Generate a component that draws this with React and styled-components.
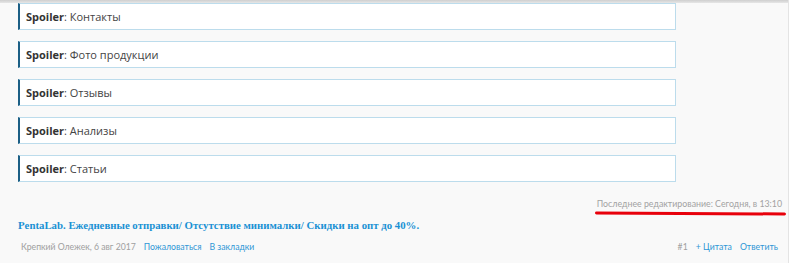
import React from "react";
import styled, { createGlobalStyle } from "styled-components";

const Global = createGlobalStyle`
  html, body {
    margin: 0;
    padding: 0;
    background: #ffffff;
  }
  body {
    font-family: "Open Sans", "DejaVu Sans", sans-serif;
  }
`;

const Post = styled.div`
  width: 789px;
  height: 263px;
  box-sizing: border-box;
  background: #f9f9f9;
  border-right: 1px solid #e4e4e4;
  display: flex;
  flex-direction: column;
`;

const TopShade = styled.div`
  height: 3px;
  flex: none;
  background: linear-gradient(#cfcfcf, #e6e6e6);
`;

const SpoilerList = styled.div`
  display: flex;
  flex-direction: column;
  gap: 11px;
  padding-left: 18px;
`;

const Spoiler = styled.div`
  width: 658px;
  height: 27px;
  box-sizing: border-box;
  background: #ffffff;
  border: 1px solid #bcdcec;
  border-left: 2px solid #1c5f85;
  display: flex;
  align-items: center;
  padding-left: 6px;
  font-size: 11px;
  color: #444;
  b {
    font-weight: 700;
    color: #333;
  }
`;

const EditNote = styled.div`
  margin-top: 15px;
  display: flex;
  flex-direction: column;
  align-items: flex-end;
  padding-right: 6px;
  font-family: Lato, "Open Sans", sans-serif;
  font-size: 8.8px;
  color: #a2a2a2;
  line-height: 14px;
`;

const RedMark = styled.div`
  width: 191px;
  height: 3px;
  margin-right: -4px;
  margin-top: 1px;
  border-radius: 2px;
  background: #e8000b;
  transform: rotate(0.3deg);
`;

const Title = styled.div`
  margin-top: 1px;
  padding-left: 18px;
  font-family: "Liberation Serif", "DejaVu Serif", serif;
  font-weight: 700;
  font-size: 10.8px;
  color: #1a91d4;
  line-height: 18px;
`;

const Meta = styled.div`
  margin-top: 6px;
  display: flex;
  justify-content: space-between;
  padding: 0 10px 0 21px;
  font-family: Lato, "Open Sans", sans-serif;
  font-size: 8.7px;
  line-height: 14px;
`;

const MetaGroup = styled.div`
  display: flex;
  gap: 8px;
`;

const Muted = styled.span`
  color: #a0a0a0;
`;

const Link = styled.a`
  color: #2f97d6;
  text-decoration: none;
`;

const spoilers = ["Контакты", "Фото продукции", "Отзывы", "Анализы", "Статьи"];

export default function App() {
  return (
    <>
      <Global />
      <Post>
        <TopShade />
        <SpoilerList>
          {spoilers.map((s) => (
            <Spoiler key={s}>
              <b>Spoiler</b>: {s}
            </Spoiler>
          ))}
        </SpoilerList>
        <EditNote>
          <span>Последнее редактирование: Сегодня, в 13:10</span>
          <RedMark />
        </EditNote>
        <Title>
          PentaLab. Ежедневные отправки/ Отсутствие минималки/ Скидки на опт до 40%.
        </Title>
        <Meta>
          <MetaGroup>
            <Muted>Крепкий Олежек, 6 авг 2017</Muted>
            <Link href="#">Пожаловаться</Link>
            <Link href="#">В закладки</Link>
          </MetaGroup>
          <MetaGroup>
            <Muted>#1</Muted>
            <Link href="#">+ Цитата</Link>
            <Link href="#">Ответить</Link>
          </MetaGroup>
        </Meta>
      </Post>
    </>
  );
}
